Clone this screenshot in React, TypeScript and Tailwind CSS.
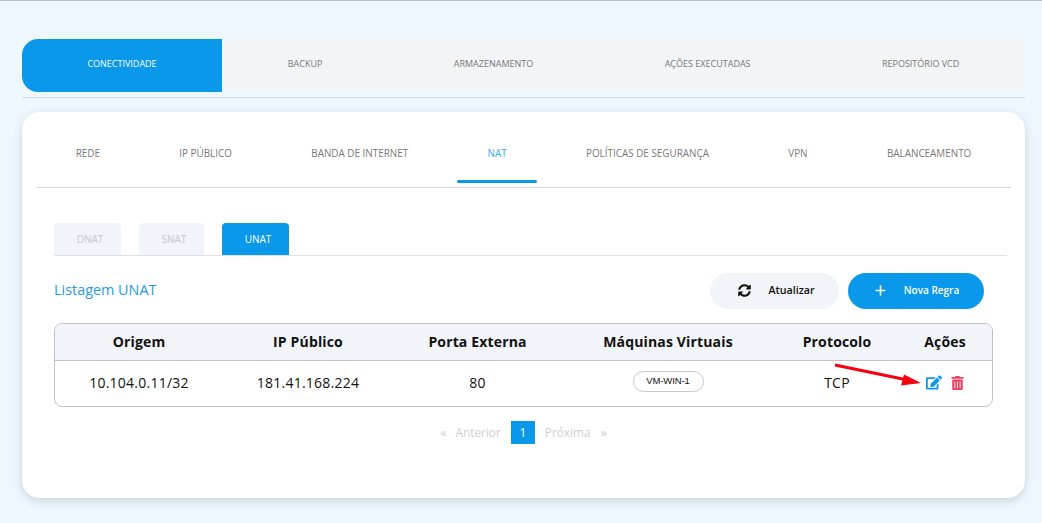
import { FaEdit, FaSyncAlt, FaTrashAlt } from "react-icons/fa";
import { Plus } from "lucide-react";

const mainTabs = ["CONECTIVIDADE", "BACKUP", "ARMAZENAMENTO", "AÇÕES EXECUTADAS", "REPOSITÓRIO VCD"];
const subTabs = ["REDE", "IP PÚBLICO", "BANDA DE INTERNET", "NAT", "POLÍTICAS DE SEGURANÇA", "VPN", "BALANCEAMENTO"];
const columns = "grid grid-cols-[168px_170px_169px_212px_126px_1fr] items-center text-center";

const App = () => {
  return (
    <div className="h-[523px] overflow-hidden border-t border-[#b9c1cd] bg-[#eff7fe] px-[22px] pt-[38px] font-['Open_Sans',sans-serif]">
      <div className="w-[1003px] border-b border-[#cfd6de] pb-[5px]">
        <ul className="flex h-[53px] rounded-l-2xl rounded-r bg-[#f1f5f8]">
          {mainTabs.map((tab, i) => (
            <li
              key={tab}
              className={`flex items-center justify-center whitespace-nowrap pb-[3px] text-[9px] ${
                i === 0 ? "w-[200px] flex-none rounded-l-2xl bg-[#0a98eb] text-white" : "flex-auto px-[65px] text-[#777]"
              }`}
            >
              {tab}
            </li>
          ))}
        </ul>
      </div>

      <div className="relative mt-[14px] h-[386px] w-[1003px] rounded-[18px] bg-white px-[14px] shadow-[0_3px_10px_rgba(90,110,125,0.25)]">
        <ul className="flex h-[76px] border-b border-[#d4d6da]">
          {subTabs.map((tab) => (
            <li
              key={tab}
              className={`relative flex flex-auto items-center justify-center whitespace-nowrap px-[39.5px] pt-[8px] text-[9.9px] ${
                tab === "NAT" ? "text-[#36a9ee]" : "text-[#777]"
              }`}
            >
              {tab}
              {tab === "NAT" && (
                <span className="absolute bottom-[4px] left-1/2 h-[3px] w-20 -translate-x-1/2 rounded-full bg-[#0a98eb]" />
              )}
            </li>
          ))}
        </ul>

        <div className="ml-[18px] mt-[35px] w-[939px]">
          <ul className="flex w-[953px] gap-[18px] border-b border-[#dfe1e5]">
            <li className="flex h-8 w-[67px] items-center justify-center rounded-t bg-[#f1f4f8] pl-[5px] text-[10px] font-medium text-[#c5c8cd]">DNAT</li>
            <li className="flex h-8 w-[65px] items-center justify-center rounded-t bg-[#f1f4f8] pl-[5px] text-[10px] font-medium text-[#c5c8cd]">SNAT</li>
            <li className="flex h-8 w-[67px] items-center justify-center rounded-t bg-[#0a98eb] pl-[5px] text-[10px] font-medium text-white">UNAT</li>
          </ul>

          <div className="mt-[17px] flex h-9 items-center">
            <h2 className="pb-[2px] text-[14.4px] text-[#1d9aea]">Listagem UNAT</h2>
            <button className="ml-auto flex h-9 w-[129px] items-center justify-center gap-[17px] rounded-full bg-[#f1f4f8] pb-[1px] pl-[4px] text-[10.7px] font-semibold text-[#111]">
              <FaSyncAlt className="h-[13px] w-[13px]" />
              Atualizar
            </button>
            <button className="ml-[9px] mr-[9px] flex h-9 w-[136px] items-center justify-center gap-[16px] rounded-full bg-[#0a98eb] pb-[1px] text-[10px] font-semibold text-white">
              <Plus className="h-[15px] w-[15px]" strokeWidth={2.5} />
              Nova Regra
            </button>
          </div>

          <div className="mt-[14px] h-[84px] overflow-hidden rounded-lg border border-[#bfc3ca] text-[14px] text-[#111]">
            <div className={`${columns} h-[37px] border-b border-[#bfc3ca] bg-[#f1f4f8] pb-[2px] font-bold tracking-[0.15px]`}>
              <span>Origem</span>
              <span>IP Público</span>
              <span>Porta Externa</span>
              <span>Máquinas Virtuais</span>
              <span>Protocolo</span>
              <span className="pr-[2px]">Ações</span>
            </div>
            <div className={`${columns} h-[45px] pb-[2px] tracking-[0.25px]`}>
              <span>10.104.0.11/32</span>
              <span>181.41.168.224</span>
              <span>80</span>
              <span className="mb-[3px] flex justify-center">
                <span className="flex h-[21px] w-[71px] items-center justify-center rounded-full border border-[#c5c8cd] font-['Liberation_Sans',sans-serif] text-[9.5px] tracking-[-0.1px]">
                  VM-WIN-1
                </span>
              </span>
              <span>TCP</span>
              <span className="flex items-center justify-center gap-[9px] pr-[2px]">
                <FaEdit className="h-[15px] w-[16px] text-[#0a98eb]" />
                <FaTrashAlt className="h-[14px] w-[13px] text-[#f0405f]" />
              </span>
            </div>
          </div>

          <div className="mt-[14px] flex items-center justify-center text-[11.8px] text-[#cfcfcf]">
            <span className="text-[13px]">«</span>
            <span className="ml-[9px]">Anterior</span>
            <span className="ml-[10px] flex h-[23px] w-6 items-center justify-center bg-[#0a98eb] text-white">1</span>
            <span className="ml-[10px]">Próxima</span>
            <span className="ml-[10px] text-[13px]">»</span>
          </div>
        </div>

        {/* red annotation arrow */}
        <svg className="absolute left-[810px] top-[250px]" width="95" height="25" viewBox="0 0 95 25">
          <path d="M3 3 L78 18.5" stroke="#f5000f" strokeWidth="3" fill="none" />
          <path d="M89 21 L72 12.5 L69 23.5 Z" fill="#f5000f" />
        </svg>
      </div>
    </div>
  );
};

export default App;
